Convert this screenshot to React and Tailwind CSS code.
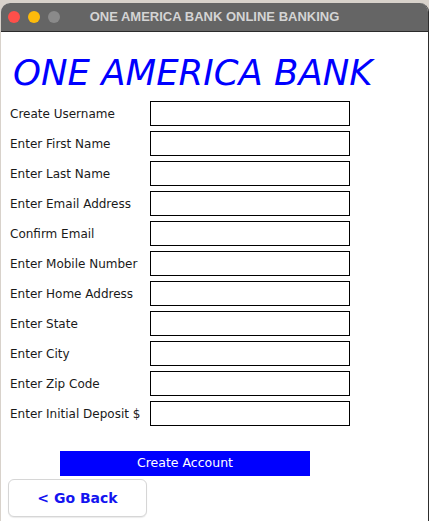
import React from 'react';

const fields = [
  'Create Username',
  'Enter First Name',
  'Enter Last Name',
  'Enter Email Address',
  'Confirm Email',
  'Enter Mobile Number',
  'Enter Home Address',
  'Enter State',
  'Enter City',
  'Enter Zip Code',
  'Enter Initial Deposit $',
];

function App() {
  return (
    <div className="w-[429px] h-[521px] overflow-hidden bg-[#d8d2cb] pt-[3px] pl-[1px]">
      <div className="h-full rounded-t-[9px] border-r border-[#2e2e2e] bg-white overflow-hidden flex flex-col">
        {/* title bar */}
        <div className="relative h-[29px] bg-[#656565] border-b border-[#2a2a2a] flex items-center justify-center">
          <div className="absolute left-[7px] top-[8px] flex gap-[8px]">
            <span className="w-[12px] h-[12px] rounded-full bg-[#fe4f4a]"></span>
            <span className="w-[12px] h-[12px] rounded-full bg-[#fdbb0b]"></span>
            <span className="w-[12px] h-[12px] rounded-full bg-[#8a8a8a]"></span>
          </div>
          <div className="text-[13px] font-bold text-[#d4d4d4] font-['Liberation_Sans',sans-serif]">
            ONE AMERICA BANK ONLINE BANKING
          </div>
        </div>

        {/* body */}
        <div className="flex-1 flex flex-col font-['DejaVu_Sans',sans-serif]">
          <h1 className="ml-[12px] mt-[18px] text-[35.5px] leading-[46px] italic text-[#0000ff]">
            ONE AMERICA BANK
          </h1>
          <div className="mt-[5px] flex flex-col gap-[5px]">
            {fields.map((label) => (
              <div key={label} className="flex items-center">
                <div className="w-[149px] shrink-0 pl-[9px] text-[12px] text-[#1a1a1a] whitespace-nowrap">
                  {label}
                </div>
                <input className="w-[200px] h-[25px] shrink-0 border border-black bg-white outline-none" />
              </div>
            ))}
          </div>
          <button className="ml-[59px] mt-[25px] w-[250px] h-[25px] bg-[#0000ff] text-white text-[12.5px]">
            Create Account
          </button>
          <button className="ml-[7px] mt-[3px] w-[139px] h-[38px] rounded-[6px] border border-[#d6d6d6] bg-white shadow-[0_1px_1px_rgba(0,0,0,0.08)] text-[14px] font-bold text-[#1414f0]">
            &lt; Go Back
          </button>
        </div>
      </div>
    </div>
  );
}

export default App;
